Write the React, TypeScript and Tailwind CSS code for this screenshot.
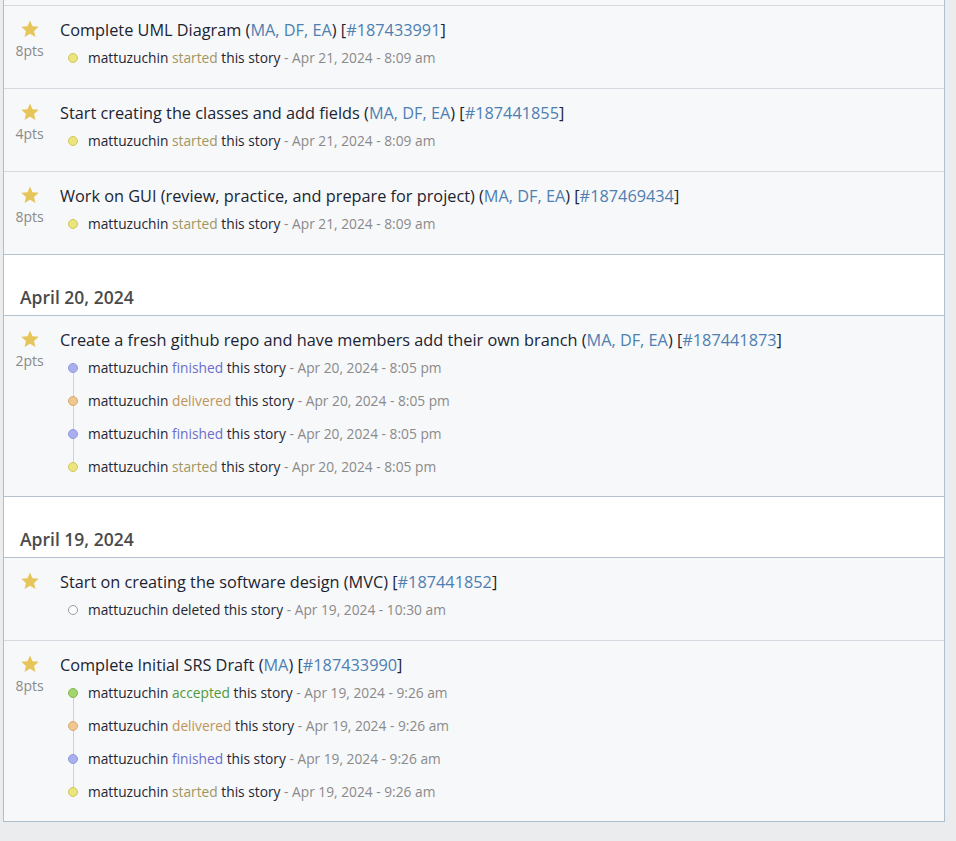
import React from "react";

type Kind = "started" | "finished" | "delivered" | "accepted" | "deleted";

type Activity = { kind: Kind; date: string };

type Story = {
  title: string;
  owners?: string;
  id: string;
  pts?: string;
  activities: Activity[];
};

const dotCls: Record<Kind, string> = {
  started: "bg-[#ece47c] border-[#d2c65c]",
  finished: "bg-[#aab0ef] border-[#8f97e0]",
  delivered: "bg-[#efc791] border-[#d9aa6a]",
  accepted: "bg-[#a4d56f] border-[#82ba4d]",
  deleted: "bg-white border-[#9a9a9a]",
};

const verbCls: Record<Kind, string> = {
  started: "text-[#a2965e]",
  finished: "text-[#6a6ecb]",
  delivered: "text-[#c09457]",
  accepted: "text-[#4f9a38]",
  deleted: "text-[#1f2733]",
};

function Star() {
  return (
    <svg width="20" height="20" viewBox="0 0 24 24" className="block">
      <path
        d="M12 1.8l3.05 6.9 7.45.7-5.65 4.95 1.7 7.35L12 17.8l-6.55 3.9 1.7-7.35L1.5 9.4l7.45-.7z"
        fill="#e6c65a"
      />
    </svg>
  );
}

function StoryRow({ s }: { s: Story }) {
  const multi = s.activities.length > 1;
  return (
    <div
      className={`flex border-t border-[#d3d9df] bg-[#f7f8fa] pt-[13px] ${
        multi ? "pb-[13px]" : "pb-[14px]"
      }`}
    >
      <div className="flex w-[51px] shrink-0 flex-col items-center">
        <div className="ml-[1px]">
          <Star />
        </div>
        {s.pts && (
          <div className="mt-[2px] text-[14px] leading-[20px] text-[#8a8a8a]">
            {s.pts}
          </div>
        )}
      </div>
      <div className="ml-[5px] flex-1">
        <div className="text-[16.3px] leading-[22px] text-[#1b2431]">
          {s.title}{" "}
          {s.owners && (
            <>
              (<span className="text-[#4e7fb1]">{s.owners}</span>){" "}
            </>
          )}
          [<span className="text-[#4e7fb1]">#{s.id}</span>]
        </div>
        <div className="relative">
          {multi && (
            <div className="absolute left-[13px] top-[16px] bottom-[16px] w-px bg-[#d2d2d2]" />
          )}
          {s.activities.map((a, i) => (
            <div
              key={i}
              className="relative flex h-[33px] items-center pl-[8px] text-[13.75px] leading-[20px]"
            >
              <span
                className={`h-[10px] w-[10px] shrink-0 rounded-full border ${dotCls[a.kind]}`}
              />
              <span className="ml-[10px] whitespace-nowrap">
                <span className="text-[#1f2733]">mattuzuchin</span>{" "}
                <span className={verbCls[a.kind]}>{a.kind}</span>{" "}
                <span className="text-[#1f2733]">this story</span>
                <span className="text-[#8a8a8a]"> - {a.date}</span>
              </span>
            </div>
          ))}
        </div>
      </div>
    </div>
  );
}

function DateHeader({ label }: { label: string }) {
  return (
    <div className="relative z-10 -mb-px border-y border-[#b4c3cf] bg-white pl-[16px] pt-[31px] pb-[6px]">
      <div className="text-[17.5px] font-semibold leading-[23px] text-[#4a4a4a]">
        {label}
      </div>
    </div>
  );
}

const MA3 = "MA, DF, EA";

export default function App() {
  return (
    <div
      className="min-h-screen bg-[#ebecee]"
      style={{ fontFamily: '"Open Sans", "Liberation Sans", sans-serif' }}
    >
      <div className="ml-[3px] w-[942px] border-x border-b border-[#aec0ce]">
        <div className="h-[5px] bg-[#f7f8fa]" />
        <StoryRow
          s={{
            title: "Complete UML Diagram",
            owners: MA3,
            id: "187433991",
            pts: "8pts",
            activities: [{ kind: "started", date: "Apr 21, 2024 - 8:09 am" }],
          }}
        />
        <StoryRow
          s={{
            title: "Start creating the classes and add fields",
            owners: MA3,
            id: "187441855",
            pts: "4pts",
            activities: [{ kind: "started", date: "Apr 21, 2024 - 8:09 am" }],
          }}
        />
        <StoryRow
          s={{
            title: "Work on GUI (review, practice, and prepare for project)",
            owners: MA3,
            id: "187469434",
            pts: "8pts",
            activities: [{ kind: "started", date: "Apr 21, 2024 - 8:09 am" }],
          }}
        />
        <DateHeader label="April 20, 2024" />
        <StoryRow
          s={{
            title:
              "Create a fresh github repo and have members add their own branch",
            owners: MA3,
            id: "187441873",
            pts: "2pts",
            activities: [
              { kind: "finished", date: "Apr 20, 2024 - 8:05 pm" },
              { kind: "delivered", date: "Apr 20, 2024 - 8:05 pm" },
              { kind: "finished", date: "Apr 20, 2024 - 8:05 pm" },
              { kind: "started", date: "Apr 20, 2024 - 8:05 pm" },
            ],
          }}
        />
        <DateHeader label="April 19, 2024" />
        <StoryRow
          s={{
            title: "Start on creating the software design (MVC)",
            id: "187441852",
            activities: [{ kind: "deleted", date: "Apr 19, 2024 - 10:30 am" }],
          }}
        />
        <StoryRow
          s={{
            title: "Complete Initial SRS Draft",
            owners: "MA",
            id: "187433990",
            pts: "8pts",
            activities: [
              { kind: "accepted", date: "Apr 19, 2024 - 9:26 am" },
              { kind: "delivered", date: "Apr 19, 2024 - 9:26 am" },
              { kind: "finished", date: "Apr 19, 2024 - 9:26 am" },
              { kind: "started", date: "Apr 19, 2024 - 9:26 am" },
            ],
          }}
        />
      </div>
    </div>
  );
}
